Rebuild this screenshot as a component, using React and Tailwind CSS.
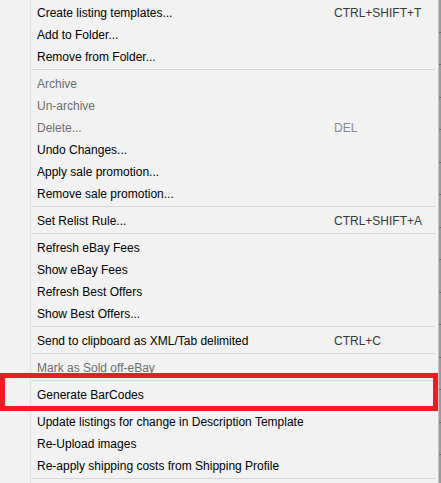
import React from 'react';

const items = [
    { label: 'Create listing templates...', key: 'CTRL+SHIFT+T' },
    { label: 'Add to Folder...' },
    { label: 'Remove from Folder...' },
    'sep',
    { label: 'Archive', disabled: true },
    { label: 'Un-archive', disabled: true },
    { label: 'Delete...', key: 'DEL', disabled: true },
    { label: 'Undo Changes...' },
    { label: 'Apply sale promotion...' },
    { label: 'Remove sale promotion...' },
    'sep',
    { label: 'Set Relist Rule...', key: 'CTRL+SHIFT+A' },
    'sep',
    { label: 'Refresh eBay Fees' },
    { label: 'Show eBay Fees' },
    { label: 'Refresh Best Offers' },
    { label: 'Show Best Offers...' },
    'sep',
    { label: 'Send to clipboard as XML/Tab delimited', key: 'CTRL+C' },
    'sep',
    { label: 'Mark as Sold off-eBay', disabled: true },
    'sep',
    { label: 'Generate BarCodes' },
    'sep',
    { label: 'Update listings for change in Description Template' },
    { label: 'Re-Upload images' },
    { label: 'Re-apply shipping costs from Shipping Profile' },
    'sep',
];

const MenuItem = ({ label, key: _k, shortcut, disabled }) => (
    <div className={`h-[22px] flex items-center leading-[22px] ${disabled ? 'text-[#6d6d6d]' : 'text-black'}`}>
        <div className="w-[37px] shrink-0" />
        <div className="flex-1 whitespace-nowrap">{label}</div>
        {shortcut && <div className={`w-[104px] shrink-0 whitespace-nowrap ${disabled ? 'text-[#8a8a8a]' : 'text-[#3a3a3a]'}`}>{shortcut}</div>}
    </div>
);

const Separator = () => (
    <div className="h-[5px] pt-[1px] pl-[32px] pr-[3px]">
        <div className="h-px bg-[#d7d7d7]" />
    </div>
);

export default function App() {
    const ticks = Array.from({ length: 15 });
    return (
        <div className="w-[441px] h-[483px] overflow-hidden flex bg-[#f2f2f2] relative" style={{ fontFamily: '"Segoe UI", "Liberation Sans", Arial, sans-serif', fontSize: '12px' }}>
            <div className="w-[438px] shrink-0 relative pt-[2px]">
                <div className="absolute left-[30px] top-0 bottom-0 w-px bg-[#e2e2e2]" />
                {items.map((it, i) =>
                    it === 'sep' ? <Separator key={i} /> : <MenuItem key={i} label={it.label} shortcut={it.key} disabled={it.disabled} />
                )}
            </div>
            <div className="w-[3px] shrink-0 bg-[#9b9b9b] border-l border-[#c8c8c8] flex flex-col">
                <div className="h-[1px]" />
                {ticks.map((_, i) => (
                    <div key={i} className="h-[32.5px] shrink-0 border-b border-[#6a6a6a]" />
                ))}
            </div>
            <div className="absolute left-0 top-[373px] w-[438px] h-[38px] border-[5px] border-[#ed1c24]" />
        </div>
    );
}
